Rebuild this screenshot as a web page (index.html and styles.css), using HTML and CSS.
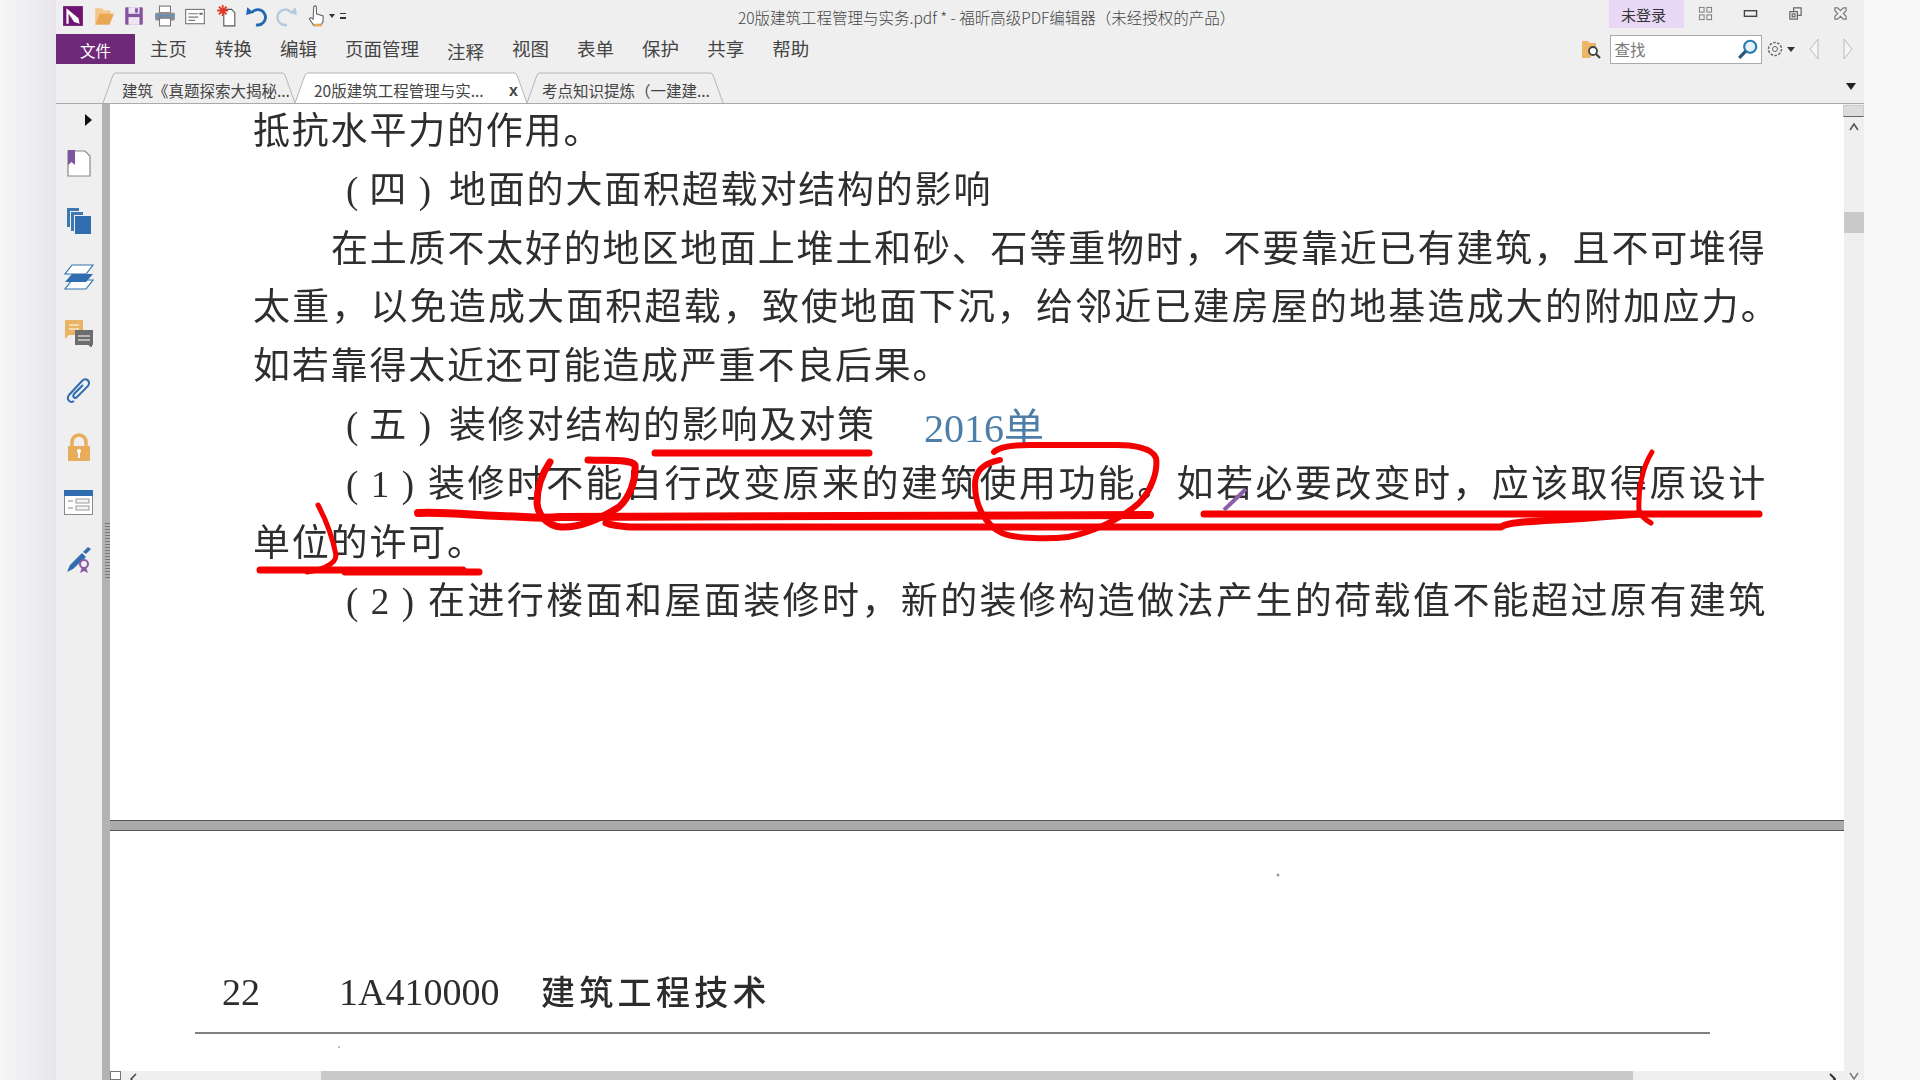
FILE: index.html
```html
<!DOCTYPE html>
<html lang="zh-CN">
<head>
<meta charset="utf-8">
<title>20版建筑工程管理与实务.pdf - 福昕高级PDF编辑器</title>
<link rel="stylesheet" href="styles.css">
</head>
<body>
<div class="screen">
  <div class="margin-left"></div>
  <div class="app">
    <header class="titlebar">
      <div class="quick">
        <svg class="qi" viewBox="0 0 20 20"><rect x="1" y="1" width="18" height="18" fill="#6f1470"/><path d="M4 3l11 9 1 5-5-1.500L6 8v9H4z" fill="#fff"/><path d="M9 4h6v5z" fill="#6f1470"/></svg>
        <svg class="qi" viewBox="0 0 20 20"><path d="M2 3h6l2 2h6v4H6l-4 9z" fill="#f3c88a"/><path d="M6 8h13l-4 10H2z" fill="#e9a954"/></svg>
        <svg class="qi" viewBox="0 0 20 20"><rect x="2" y="2" width="16" height="16" rx="1" fill="#85539f"/><rect x="5" y="2" width="10" height="6" fill="#efe6f3"/><rect x="5" y="11" width="10" height="7" fill="#efe6f3"/><rect x="11" y="3" width="2.500" height="4" fill="#85539f"/></svg>
        <svg class="qi" viewBox="0 0 20 20"><rect x="5" y="1" width="10" height="6" fill="#fff" stroke="#777"/><rect x="1" y="7" width="18" height="7" rx="1" fill="#8a8f96"/><rect x="5" y="12" width="10" height="7" fill="#fff" stroke="#777"/><rect x="2" y="9" width="16" height="1.500" fill="#5f8fc0"/></svg>
        <svg class="qi" viewBox="0 0 20 20"><rect x="1.500" y="4" width="17" height="13" fill="#fff" stroke="#777"/><path d="M4 8h9M4 11h9M4 14h6" stroke="#777"/><rect x="14" y="7" width="3" height="2" fill="#777"/></svg>
        <svg class="qi" viewBox="0 0 20 20"><path d="M8 4h7l3 3v12H8z" fill="#fff" stroke="#555"/><path d="M7 0v10M2 5h10M3.500 1.500l7 7M10.500 1.500l-7 7" stroke="#e2382a" stroke-width="1.600"/></svg>
        <svg class="qi" viewBox="0 0 20 20"><path d="M6 7a7 7 0 1 1 4 11" fill="none" stroke="#2067b4" stroke-width="2.600"/><path d="M1 9l1-7 6 5z" fill="#2067b4"/></svg>
        <svg class="qi" viewBox="0 0 20 20"><path d="M14 7a7 7 0 1 0-4 11" fill="none" stroke="#b5c9de" stroke-width="2.200"/><path d="M19 9l-1-7-6 5z" fill="#b5c9de"/></svg>
        <svg class="qi" viewBox="0 0 20 20"><path d="M7 1.500c1-1 2.500-1 2.500.5v6l6 2v5l-2 3.500H7l-4-6 1.500-1 2 1.500z" fill="#fff" stroke="#666"/><path d="M7 17h7v2.500H7z" fill="#e7ab5c"/></svg>
        <span class="drop-mini"></span>
        <span class="custom-mini"></span>
      </div>
      <div class="doc-title">20版建筑工程管理与实务.pdf * - 福昕高级PDF编辑器（未经授权的产品）</div>
      <div class="win">
        <div class="login">未登录</div>
        <div class="win-buttons">
          <svg class="wi" viewBox="0 0 16 16"><g fill="none" stroke="#777"><rect x="1.500" y="1.500" width="5" height="5"/><rect x="9.500" y="1.500" width="5" height="5"/><rect x="1.500" y="9.500" width="5" height="5"/><rect x="9.500" y="9.500" width="5" height="5"/></g></svg>
          <svg class="wi" viewBox="0 0 16 16"><rect x="1.500" y="5" width="13" height="6" fill="#eee" stroke="#444" stroke-width="1.500"/></svg>
          <svg class="wi" viewBox="0 0 16 16"><g fill="none" stroke="#666" stroke-width="1.300"><rect x="2" y="6" width="8" height="8"/><path d="M6 6V2h8v8h-4"/><rect x="4.500" y="8.500" width="3" height="3"/></g></svg>
          <svg class="wi" viewBox="0 0 16 16"><path d="M2 2h3l3 3 3-3h3v3l-3 3 3 3v3h-3l-3-3-3 3H2v-3l3-3-3-3z" fill="none" stroke="#777" stroke-width="1.200"/></svg>
        </div>
      </div>
    </header>

    <nav class="menubar">
      <div class="file-btn">文件</div>
      <div class="menu">
        <span>主页</span><span>转换</span><span>编辑</span><span>页面管理</span><span class="menu-low">注释</span><span>视图</span><span>表单</span><span>保护</span><span>共享</span><span>帮助</span>
      </div>
      <div class="find">
        <svg class="find-folder" viewBox="0 0 20 20"><path d="M1 2h6l2 2h6v6l-6 9H1z" fill="#edb566"/><circle cx="12" cy="12" r="4" fill="#fff" stroke="#444" stroke-width="1.800"/><path d="M15 15l4 4" stroke="#444" stroke-width="2.200"/></svg>
        <div class="find-box">
          <span>查找</span>
          <svg class="find-lens" viewBox="0 0 20 20"><circle cx="12" cy="8" r="5.500" fill="#e6f2fa" stroke="#2a7cb0" stroke-width="2"/><path d="M8 12l-6 6" stroke="#27577f" stroke-width="3"/></svg>
        </div>
        <svg class="find-gear" viewBox="0 0 18 18"><circle cx="9" cy="9" r="6.500" fill="none" stroke="#666" stroke-width="1.500" stroke-dasharray="2.500 1.500"/><circle cx="9" cy="9" r="2.500" fill="none" stroke="#666"/></svg>
        <span class="gear-drop"></span>
        <svg class="find-nav find-prev" viewBox="0 0 12 24"><path d="M10 2L2 12l8 10z" fill="#f5f5f5" stroke="#bbb"/></svg>
        <svg class="find-nav find-next" viewBox="0 0 12 24"><path d="M2 2l8 10-8 10z" fill="#f5f5f5" stroke="#bbb"/></svg>
      </div>
    </nav>

    <div class="tabbar">
      <div class="tab tab-a">
        <svg class="tab-shape" viewBox="0 0 192 30" preserveAspectRatio="none"><path d="M0 30L10 2q1-2 3-2h166q2 0 3 2l10 28" fill="#efefef" stroke="#b5b5b5"/></svg>
        <span class="tab-label">建筑《真题探索大揭秘...</span>
      </div>
      <div class="tab tab-b">
        <svg class="tab-shape" viewBox="0 0 232 30" preserveAspectRatio="none"><path d="M0 30L10 2q1-2 3-2h206q2 0 3 2l10 28" fill="#fff" stroke="#b5b5b5"/></svg>
        <span class="tab-label">20版建筑工程管理与实...</span>
        <span class="tab-x">x</span>
      </div>
      <div class="tab tab-c">
        <svg class="tab-shape" viewBox="0 0 196 30" preserveAspectRatio="none"><path d="M0 30L10 2q1-2 3-2h170q2 0 3 2l10 28" fill="#efefef" stroke="#b5b5b5"/></svg>
        <span class="tab-label">考点知识提炼（一建建...</span>
      </div>
      <span class="tabs-more"></span>
    </div>

    <main class="main">
      <aside class="sidebar">
        <span class="side-arrow"></span>
        <svg class="si" viewBox="0 0 28 28"><path d="M3 2h17l5 5v20H3z" fill="#fff" stroke="#888" stroke-width="1.200"/><path d="M3 1h7v15l-3.500-3L3 16z" fill="#7d559f"/></svg>
        <svg class="si" viewBox="0 0 28 28"><path d="M2 2h12v3H5v16H2z" fill="#3d78b5"/><path d="M6 6h12v3H9v16H6z" fill="#3d78b5"/><rect x="10" y="10" width="16" height="18" fill="#2f6db0"/></svg>
        <svg class="si si-wide" viewBox="0 0 30 28"><path d="M8 2h21l-7 9H1z" fill="#fff" stroke="#3272b2" stroke-width="1.200"/><path d="M8 17h21l-7 9H1z" fill="#fff" stroke="#3272b2" stroke-width="1.200"/><path d="M8 11h21l-7 8H1z" fill="#2f6db0"/></svg>
        <svg class="si si-wide" viewBox="0 0 30 28"><path d="M1 1h18v15H5l-4 4z" fill="#e9b465"/><path d="M5 6h10M5 10h10" stroke="#fff" stroke-width="1.200"/><path d="M11 11h18v15h-1v3l-4-3H11z" fill="#6d6d6d"/><path d="M14 17h12M14 21h12" stroke="#fff" stroke-width="1.200"/></svg>
        <svg class="si" viewBox="0 0 28 28"><path d="M9 25c-4 3-8-2-5-6L17 5c4-4 9 0 6 5L12 21c-2 2-5 0-3-3l9-9" fill="none" stroke="#2f6db0" stroke-width="2"/></svg>
        <svg class="si" viewBox="0 0 28 28"><path d="M7 13V9a7 7 0 0 1 14 0v4" fill="none" stroke="#e8ad5a" stroke-width="3.500"/><rect x="3" y="13" width="22" height="15" fill="#e8ad5a"/><circle cx="14" cy="18" r="2" fill="#fff"/><rect x="13" y="18" width="2" height="7" fill="#fff"/></svg>
        <svg class="si si-wide" viewBox="0 0 30 28"><rect x=".5" y=".5" width="28" height="24" fill="#fff" stroke="#888"/><rect width="29" height="6" fill="#2f6db0"/><path d="M4 11h5M4 18h5" stroke="#888"/><rect x="12" y="9" width="13" height="4" fill="#f3f3f3" stroke="#999"/><rect x="12" y="16" width="13" height="4" fill="#f3f3f3" stroke="#999"/></svg>
        <svg class="si" viewBox="0 0 28 28"><path d="M2 26l3-7L17 7l4 4L8 23z" fill="#2f6db0"/><path d="M18 6l5-5 3 2-5 5z" fill="#2f6db0"/><circle cx="19" cy="18" r="4" fill="none" stroke="#8a5ba5" stroke-width="2"/><path d="M15 27l2-6h4l2 6-4-2z" fill="#8a5ba5"/></svg>
      </aside>
      <div class="splitter"><span class="grip"></span></div>

      <div class="viewer">
        <section class="page page-top">
          <div class="page-text">
            <div class="line line-flush">抵抗水平力的作用。</div>
            <div class="line line-num"><span class="num num-wide">( 四 )</span>地面的大面积超载对结构的影响</div>
            <div class="line line-indent">在土质不太好的地区地面上堆土和砂、石等重物时，不要靠近已有建筑，且不可堆得</div>
            <div class="line line-flush line-mid">太重，以免造成大面积超载，致使地面下沉，给邻近已建房屋的地基造成大的附加应力。</div>
            <div class="line line-flush">如若靠得太近还可能造成严重不良后果。</div>
            <div class="line line-num"><span class="num num-wide">( 五 )</span>装修对结构的影响及对策</div>
            <div class="line line-num line-loose"><span class="num">( 1 )</span>装修时不能自行改变原来的建筑使用功能。如若必要改变时，应该取得原设计</div>
            <div class="line line-flush">单位的许可。</div>
            <div class="line line-num line-loose"><span class="num">( 2 )</span>在进行楼面和屋面装修时，新的装修构造做法产生的荷载值不能超过原有建筑</div>
          </div>
          <div class="stamp">2016单</div>
        </section>
        <div class="page-gap"></div>
        <section class="page page-bottom">
          <div class="running-head">
            <span class="folio">22</span>
            <span class="code">1A410000</span>
            <span class="chapter">建筑工程技术</span>
          </div>
          <div class="head-rule"></div>
        </section>
        <div class="hscroll">
          <span class="hs-box"></span>
          <svg class="hs-left" viewBox="0 0 8 12"><path d="M6 1L1 6l5 5" fill="none" stroke="#444" stroke-width="1.500"/></svg>
          <span class="hs-thumb"></span>
          <svg class="hs-right" viewBox="0 0 8 12"><path d="M2 1l5 5-5 5" fill="none" stroke="#333" stroke-width="2"/></svg>
        </div>
      </div>

      <div class="vscroll">
        <span class="vs-split"></span>
        <svg class="vs-up" viewBox="0 0 10 8"><path d="M1 7l4-6 4 6" fill="none" stroke="#555" stroke-width="1.600"/></svg>
        <span class="vs-thumb"></span>
        <svg class="vs-down" viewBox="0 0 10 8"><path d="M1 1l4 6 4-6" fill="none" stroke="#777" stroke-width="1.400"/></svg>
      </div>
    </main>
  </div>
  <div class="margin-right"></div>

  <svg class="ink" viewBox="0 0 1920 1080">
    <g fill="none" stroke="#f40000" stroke-linecap="round" stroke-linejoin="round">
      <path stroke-width="7" d="M655 453H869"/>
      <path stroke-width="8" d="M418 513C450 512 470 515 500 516S540 519 560 517L1150 515"/>
      <path stroke-width="7" d="M606 523C620 528 640 527 660 527H1400L1501 527C1510 520 1560 521 1600 517L1640 514"/>
      <path stroke-width="7" d="M1204 514H1759"/>
      <path stroke-width="7" d="M550 462C541 475 537 490 537 503C538 516 548 526 561 527C580 528 600 519 619 507C630 497 636 480 635 465C630 459 610 461 588 460"/>
      <path stroke-width="6" d="M1000 460C984 463 975 470 975 485C975 505 985 525 1002 533C1015 539 1050 539 1068 537C1090 533 1120 520 1139 503C1152 490 1158 470 1156 458C1152 447 1130 445 1117 445H1030C1010 445 998 448 994 452"/>
      <path stroke-width="5" d="M1652 452C1642 468 1638 490 1639 510C1640 516 1646 520 1651 523"/>
      <path stroke-width="5" d="M318 505C326 520 333 540 336 555C336 565 320 570 307 572"/>
      <path stroke-width="7" d="M260 570H463"/>
      <path stroke-width="7" d="M345 572H479"/>
    </g>
    <path d="M1224 510L1246 489" stroke="#8a5fa8" stroke-width="4" fill="none"/>
    <circle cx="1278" cy="875" r="1.500" fill="#999"/>
    <circle cx="339" cy="1047" r="1" fill="#aaa"/>
  </svg>
</div>
</body>
</html>
```

FILE: styles.css
```css
* { box-sizing: border-box; }
html, body { margin: 0; padding: 0; height: 100%; }
body {
  background: #f4f4f6;
  font-family: "Noto Sans CJK SC", "Liberation Sans", sans-serif;
  color: #333;
  overflow: hidden;
}
.screen {
  position: relative;
  display: flex;
  width: 1920px;
  height: 1080px;
  overflow: hidden;
}
.margin-left { width: 56px; background: linear-gradient(90deg, #f6f6f7, #e7e5ea); }
.margin-right { width: 56px; background: #f9f9f9; }
.app { width: 1808px; display: flex; flex-direction: column; background: #efefef; }

/* title bar */
.titlebar { height: 34px; display: flex; align-items: flex-start; }
.quick { display: flex; align-items: center; gap: 8.500px; height: 32px; padding-left: 6px; width: 682px; }
.qi { width: 22px; height: 22px; flex: none; }
.drop-mini { width: 0; height: 0; border: 3.500px solid transparent; border-top: 4px solid #333; margin: 3px 0 0 -8px; }
.custom-mini { width: 6px; height: 6px; border-top: 1px solid #333; border-bottom: 2px solid #333; margin-left: -3px; }
.doc-title { width: 520px; font-size: 15.500px; line-height: 34px; color: #444; white-space: nowrap; font-weight: 300; }
.win { margin-left: auto; display: flex; align-items: flex-start; }
.login {
  width: 75px; height: 28px; background: #e8d8f6; text-align: center;
  font-size: 15px; line-height: 30px; color: #333; margin-right: 2px; padding-right: 6px;
}
.win-buttons { display: flex; gap: 30px; padding: 6px 16px 0 12px; }
.wi { width: 15px; height: 15px; flex: none; }

/* menu */
.menubar { height: 30px; display: flex; align-items: stretch; }
.file-btn { width: 79px; background: #6e2a79; color: #fff; font-size: 15.500px; line-height: 32px; text-align: center; }
.menu { display: flex; gap: 28px; padding-left: 15px; font-size: 18.500px; line-height: 28px; color: #444; }
.menu-low { padding-top: 3px; }
.find { margin-left: auto; display: flex; align-items: center; padding-right: 10px; }
.find-folder { width: 20px; height: 20px; margin-right: 9px; }
.find-box {
  width: 152.500px; height: 29px; background: #fff; border: 1px solid #aaa;
  display: flex; align-items: center; justify-content: space-between;
  padding: 0 2px 0 4px; font-size: 15.500px; color: #777;
}
.find-lens { width: 22px; height: 22px; }
.find-gear { width: 18px; height: 18px; margin-left: 3.500px; }
.gear-drop { width: 0; height: 0; border: 4px solid transparent; border-top: 5px solid #333; margin: 5px 0 0 3px; }
.find-nav { width: 12px; height: 24px; }
.find-prev { margin-left: 13.500px; }
.find-next { margin-left: 22px; }

/* tabs */
.tabbar { height: 40px; padding: 9px 0 0 47px; display: flex; align-items: stretch; border-bottom: 1px solid #aaa; position: relative; }
.tab { position: relative; display: flex; align-items: center; height: 30px; font-size: 15.500px; color: #444; white-space: nowrap; }
.tab-a { width: 192px; padding-left: 19px; }
.tab-b { width: 232px; padding-left: 19px; }
.tab-c { width: 196px; padding-left: 15px; }
.tab-shape { position: absolute; left: 0; top: 0; width: 100%; height: 100%; overflow: visible; }
.tab-label { position: relative; margin-top: 3px; }
.tab-x { position: absolute; left: 214px; top: 9px; font-family: "Liberation Sans", sans-serif; font-size: 16px; line-height: 18px; font-weight: 700; }
.tabs-more { position: absolute; left: 1790px; top: 19px; border: 5px solid transparent; border-top: 7px solid #222; }

/* main */
.main { flex: 1; display: flex; min-height: 0; }
.sidebar { width: 46px; display: flex; flex-direction: column; align-items: center; padding-top: 45px; gap: 28.750px; position: relative; }
.si { width: 28px; height: 28px; flex: none; }
.si-wide { width: 30px; }
.side-arrow { position: absolute; left: 29px; top: 10px; border: 6px solid transparent; border-left: 7px solid #111; }
.splitter { width: 8px; background: #b3b3b3; position: relative; }
.grip { position: absolute; left: 3px; top: 418px; width: 5px; height: 56px; background: repeating-linear-gradient(0deg, #777 0 1px, transparent 1px 3px); }
.viewer { width: 1734px; display: flex; flex-direction: column; background: #fff; }
.page { position: relative; background: #fff; }
.page-top { height: 716px; }
.page-text { margin-top: -5px; filter: blur(.45px); color: #2e2e2e; font-size: 37px; letter-spacing: 1.800px; }
.line { height: 58.800px; line-height: 58.800px; white-space: nowrap; padding-left: 143px; }
.line-indent { padding-left: 221px; }
.line-num { padding-left: 236px; }
.line-mid { letter-spacing: 2.150px; }
.line-loose { letter-spacing: 2.400px; }
.num {
  display: inline-block; width: 68px; margin-right: 14px;
  font-family: "Liberation Serif", "Noto Sans CJK SC", serif;
  text-align: justify; text-align-last: justify; letter-spacing: 0;
}
.num-wide { width: 85px; margin-right: 18px; }
.stamp {
  position: absolute; left: 814px; top: 295px;
  font-family: "Liberation Serif", "Noto Sans CJK SC", serif;
  font-size: 40px; line-height: 60px; color: #4d7ea8; filter: blur(.3px); white-space: nowrap;
}
.page-gap { height: 11px; background: #ababab; border-top: 1px solid #555; border-bottom: 1px solid #555; }
.page-bottom { height: 240px; }
.running-head {
  display: flex; align-items: baseline; padding: 133px 0 0 112px; height: 190px;
  font-family: "Liberation Serif", "Noto Sans CJK SC", serif;
  font-size: 38px; line-height: 56px; color: #2c2c2c; filter: blur(.3px); white-space: nowrap;
}
.folio { width: 117px; }
.code { width: 202px; }
.chapter { font-size: 34px; letter-spacing: 4.300px; font-weight: 500; }
.head-rule { height: 2px; margin: 11px 134px 0 85px; background: #808080; filter: blur(.4px); }
.hscroll { height: 9px; position: relative; background: #efefef; overflow: hidden; }
.hs-box { position: absolute; left: 0; top: 0; width: 11px; height: 9px; background: #fff; border: 1px solid #777; }
.hs-left { position: absolute; left: 20px; top: 2px; width: 8px; height: 12px; }
.hs-thumb { position: absolute; left: 211px; width: 1312px; top: 0; height: 9px; background: #c9c9c9; }
.hs-right { position: absolute; left: 1718px; top: 2px; width: 8px; height: 12px; }
.vscroll { width: 20px; position: relative; background: #efefef; }
.vs-split { position: absolute; left: -1px; top: 1px; width: 21px; height: 12px; background: #dcdcdc; border: 1px solid #ccc; border-bottom: 1px solid #666; }
.vs-up { position: absolute; left: 5px; top: 19px; width: 10px; height: 8px; }
.vs-thumb { position: absolute; left: 0; top: 108px; width: 20px; height: 21px; background: #c9c9c9; }
.vs-down { position: absolute; left: 5px; bottom: 0; width: 10px; height: 8px; }

.ink { position: absolute; left: 0; top: 0; width: 1920px; height: 1080px; pointer-events: none; filter: blur(.3px); }
```
